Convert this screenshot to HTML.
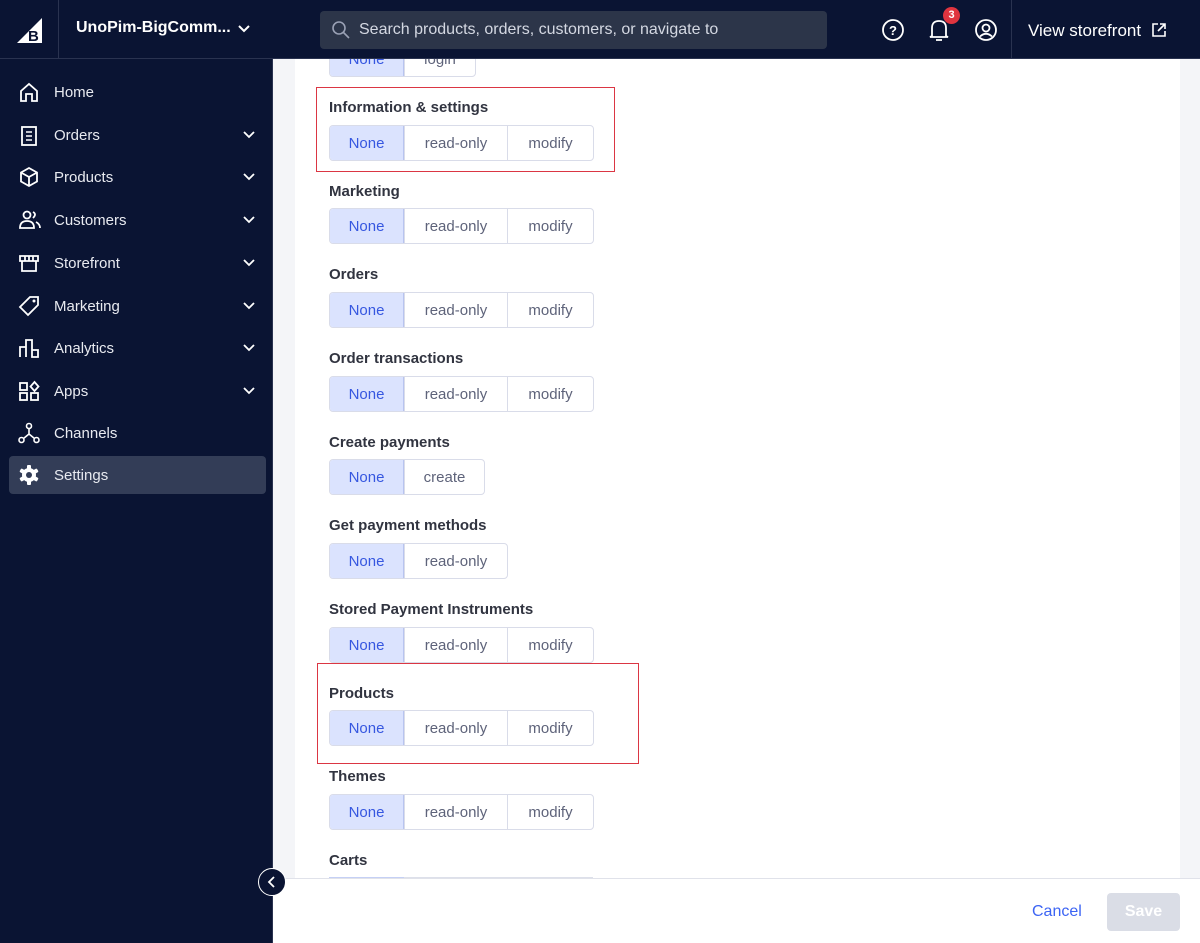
<!DOCTYPE html>
<html><head><meta charset="utf-8"><style>
*{box-sizing:border-box;margin:0;padding:0}
body{width:1200px;height:943px;overflow:hidden;font-family:"Liberation Sans",sans-serif;background:#f4f5f8;position:relative}
.hdr{position:absolute;left:0;top:0;width:1200px;height:59px;background:#0a1433;border-bottom:1px solid #2a3350;z-index:10}
.side{position:absolute;left:0;top:59px;width:273px;height:884px;background:#0a1433;border-right:1px solid #2a3350;z-index:5}
.nav{position:absolute;left:0;width:273px;height:38px;color:#e8eaf0;font-size:15px;display:flex;align-items:center}
.nav svg{position:absolute;left:18px}
.nav span{position:absolute;left:54px}
.nav .ch{position:absolute;left:242px}
.card{position:absolute;left:295px;top:59px;width:885px;height:820px;background:#fff}
.lbl{position:absolute;left:329px;font-size:15px;font-weight:bold;color:#313440}
.grp{position:absolute;left:329px;height:36px;display:flex;border:1px solid #d9dce9;border-radius:4px;overflow:hidden;background:#fff}
.grp div{height:34px;display:flex;align-items:center;justify-content:center;font-size:15px;color:#5e637a;border-left:1px solid #d9dce9}
.grp div:first-child{border-left:none;background:#dbe3fe;color:#3657e0;width:74px;border-right:1px solid #b8c4f0}
.grp .r{width:103px}.grp .m{width:86px}
.red{position:absolute;border:1.5px solid #db3643}
.foot{position:absolute;left:273px;top:878px;width:927px;height:65px;background:#fff;border-top:1px solid #e0e2ea;z-index:4}
</style></head><body>
<div class="hdr">
 <svg style="position:absolute;left:16px;top:17px" width="27" height="27" viewBox="0 0 27 27"><path d="M26 1 L26 26 L1 26 Z" fill="#fff"/><text x="12" y="24" font-size="15" font-weight="bold" fill="#0a1433" font-family="Liberation Sans">B</text></svg>
 <div style="position:absolute;left:58px;top:0;width:1px;height:59px;background:#2a3350"></div>
 <div style="position:absolute;left:76px;top:19px;color:#fff;font-size:16px;font-weight:bold">UnoPim-BigComm...</div>
 <svg style="position:absolute;left:237px;top:24px" width="14" height="10"><path d="M2 2 L7 7 L12 2" stroke="#fff" stroke-width="2" fill="none"/></svg>
 <div style="position:absolute;left:320px;top:11px;width:507px;height:38px;background:#2c3549;border-radius:4px"></div>
 <svg style="position:absolute;left:331px;top:20px" width="20" height="20"><circle cx="8" cy="8" r="6" stroke="#9aa1b5" stroke-width="1.6" fill="none"/><path d="M12.5 12.5 L18 18" stroke="#9aa1b5" stroke-width="1.6"/></svg>
 <div style="position:absolute;left:359px;top:21px;color:#d4d8e2;font-size:16px">Search products, orders, customers, or navigate to</div>
 <svg style="position:absolute;left:881px;top:18px" width="24" height="24"><circle cx="12" cy="12" r="10" stroke="#fff" stroke-width="1.8" fill="none"/><text x="12" y="17" text-anchor="middle" font-size="13" font-weight="bold" fill="#fff" font-family="Liberation Sans">?</text></svg>
 <svg style="position:absolute;left:928px;top:17px" width="22" height="26"><path d="M4 19 L4 11 Q4 4 11 4 Q18 4 18 11 L18 19 L20 20 L2 20 Z" stroke="#fff" stroke-width="1.8" fill="none"/><path d="M8 23 L14 23" stroke="#fff" stroke-width="1.8"/></svg>
 <div style="position:absolute;left:943px;top:7px;width:17px;height:17px;border-radius:50%;background:#e0343f;color:#fff;font-size:11px;font-weight:bold;text-align:center;line-height:17px">3</div>
 <svg style="position:absolute;left:974px;top:18px" width="24" height="24"><circle cx="12" cy="12" r="10" stroke="#fff" stroke-width="1.8" fill="none"/><circle cx="12" cy="10" r="3.5" stroke="#fff" stroke-width="1.8" fill="none"/><path d="M6 18.5 Q12 13 18 18.5" stroke="#fff" stroke-width="1.8" fill="none"/></svg>
 <div style="position:absolute;left:1011px;top:0;width:1px;height:59px;background:#2a3350"></div>
 <div style="position:absolute;left:1028px;top:21px;color:#fff;font-size:17px">View storefront</div>
 <svg style="position:absolute;left:1151px;top:22px" width="16" height="16"><path d="M7 2 L2 2 L2 14 L14 14 L14 9 M9 2 L14 2 L14 7 M14 2 L7 9" stroke="#fff" stroke-width="1.6" fill="none"/></svg>
</div>
<div class="side">
 <div class="nav" style="top:14px"><svg width="22" height="22"><path d="M3 10 L11 3 L19 10 L19 20 L14 20 L14 13 L8 13 L8 20 L3 20 Z" stroke="#fff" stroke-width="1.8" fill="none"/></svg><span>Home</span></div>
 <div class="nav" style="top:57px"><svg width="22" height="22"><rect x="4" y="3" width="14" height="18" stroke="#fff" stroke-width="1.8" fill="none"/><path d="M8 8h6M8 12h6M8 16h6" stroke="#fff" stroke-width="1.6"/></svg><span>Orders</span><svg class="ch" width="14" height="10"><path d="M2 2 L7 7 L12 2" stroke="#fff" stroke-width="1.8" fill="none"/></svg></div>
 <div class="nav" style="top:99px"><svg width="22" height="22"><path d="M11 2 L19 6.5 L19 15.5 L11 20 L3 15.5 L3 6.5 Z M3 6.5 L11 11 L19 6.5 M11 11 L11 20" stroke="#fff" stroke-width="1.8" fill="none"/></svg><span>Products</span><svg class="ch" width="14" height="10"><path d="M2 2 L7 7 L12 2" stroke="#fff" stroke-width="1.8" fill="none"/></svg></div>
 <div class="nav" style="top:142px"><svg width="24" height="22"><circle cx="9" cy="6" r="3.5" stroke="#fff" stroke-width="1.8" fill="none"/><path d="M2 19 Q2 12 9 12 Q16 12 16 19 Z" stroke="#fff" stroke-width="1.8" fill="none"/><path d="M15 3 Q19 5 15 9 M18 13 Q22 15 22 19" stroke="#fff" stroke-width="1.8" fill="none"/></svg><span>Customers</span><svg class="ch" width="14" height="10"><path d="M2 2 L7 7 L12 2" stroke="#fff" stroke-width="1.8" fill="none"/></svg></div>
 <div class="nav" style="top:185px"><svg width="22" height="22"><path d="M2 4 L20 4 L20 9 L2 9 Z M4 9 L4 19 L18 19 L18 9 M7 4 L7 9 M11 4 L11 9 M15 4 L15 9" stroke="#fff" stroke-width="1.8" fill="none"/></svg><span>Storefront</span><svg class="ch" width="14" height="10"><path d="M2 2 L7 7 L12 2" stroke="#fff" stroke-width="1.8" fill="none"/></svg></div>
 <div class="nav" style="top:228px"><svg width="22" height="22"><path d="M12 2 L20 2 L20 10 L10 20 L2 12 Z" stroke="#fff" stroke-width="1.8" fill="none"/><circle cx="16" cy="6" r="1.5" fill="#fff"/></svg><span>Marketing</span><svg class="ch" width="14" height="10"><path d="M2 2 L7 7 L12 2" stroke="#fff" stroke-width="1.8" fill="none"/></svg></div>
 <div class="nav" style="top:270px"><svg width="22" height="22"><path d="M2 20 L2 10 L8 10 L8 20 M8 20 L8 3 L14 3 L14 20 M14 20 L14 13 L20 13 L20 20 Z" stroke="#fff" stroke-width="1.8" fill="none"/></svg><span>Analytics</span><svg class="ch" width="14" height="10"><path d="M2 2 L7 7 L12 2" stroke="#fff" stroke-width="1.8" fill="none"/></svg></div>
 <div class="nav" style="top:313px"><svg width="22" height="22"><rect x="2" y="3" width="7" height="7" stroke="#fff" stroke-width="1.8" fill="none"/><rect x="2" y="13" width="7" height="7" stroke="#fff" stroke-width="1.8" fill="none"/><rect x="13" y="13" width="7" height="7" stroke="#fff" stroke-width="1.8" fill="none"/><path d="M16.5 2 L20.5 6.5 L16.5 11 L12.5 6.5 Z" stroke="#fff" stroke-width="1.8" fill="none"/></svg><span>Apps</span><svg class="ch" width="14" height="10"><path d="M2 2 L7 7 L12 2" stroke="#fff" stroke-width="1.8" fill="none"/></svg></div>
 <div class="nav" style="top:355px"><svg width="22" height="22"><circle cx="11" cy="4" r="2.5" stroke="#fff" stroke-width="1.6" fill="none"/><circle cx="3.5" cy="18" r="2.5" stroke="#fff" stroke-width="1.6" fill="none"/><circle cx="18.5" cy="18" r="2.5" stroke="#fff" stroke-width="1.6" fill="none"/><path d="M11 6.5 L11 12 L5.5 16.5 M11 12 L16.5 16.5" stroke="#fff" stroke-width="1.6" fill="none"/></svg><span>Channels</span></div>
 <div style="position:absolute;left:9px;top:397px;width:257px;height:38px;background:#333d57;border-radius:4px"></div>
 <div class="nav" style="top:397px"><svg width="22" height="22" viewBox="0 0 22 22"><g fill="#fff"><circle cx="11" cy="11" r="7"/><rect x="9" y="1" width="4" height="20" rx="1"/><rect x="9" y="1" width="4" height="20" rx="1" transform="rotate(60 11 11)"/><rect x="9" y="1" width="4" height="20" rx="1" transform="rotate(120 11 11)"/></g><circle cx="11" cy="11" r="3" fill="#333d57"/></svg><span>Settings</span></div>
</div>
<div class="card"></div>
<div class="grp" style="top:41px"><div>None</div><div style="width:71px">login</div></div>
<div class="red" style="left:316px;top:87px;width:299px;height:85px"></div>
<div class="red" style="left:317px;top:663px;width:322px;height:101px"></div>
<div class="foot">
 <div style="position:absolute;left:759px;top:24px;color:#3c64f4;font-size:16px">Cancel</div>
 <div style="position:absolute;left:834px;top:14px;width:73px;height:38px;background:#dadde6;border-radius:4px;color:#fff;font-size:16px;font-weight:bold;text-align:center;line-height:38px">Save</div>
</div>
<div style="position:absolute;left:258px;top:868px;width:28px;height:28px;border-radius:50%;background:#0a1433;border:1.5px solid #fff;z-index:8"></div>
<svg style="position:absolute;left:265px;top:875px;z-index:9" width="14" height="14"><path d="M9 2 L4 7 L9 12" stroke="#fff" stroke-width="1.8" fill="none"/></svg>
<div class="lbl" style="top:99px">Information &amp; settings</div>
<div class="grp" style="top:125px"><div>None</div><div class="r">read-only</div><div class="m">modify</div></div>
<div class="lbl" style="top:183px">Marketing</div>
<div class="grp" style="top:208px"><div>None</div><div class="r">read-only</div><div class="m">modify</div></div>
<div class="lbl" style="top:266px">Orders</div>
<div class="grp" style="top:292px"><div>None</div><div class="r">read-only</div><div class="m">modify</div></div>
<div class="lbl" style="top:350px">Order transactions</div>
<div class="grp" style="top:376px"><div>None</div><div class="r">read-only</div><div class="m">modify</div></div>
<div class="lbl" style="top:434px">Create payments</div>
<div class="grp" style="top:459px"><div>None</div><div style="width:80px">create</div></div>
<div class="lbl" style="top:517px">Get payment methods</div>
<div class="grp" style="top:543px"><div>None</div><div class="r">read-only</div></div>
<div class="lbl" style="top:601px">Stored Payment Instruments</div>
<div class="grp" style="top:627px"><div>None</div><div class="r">read-only</div><div class="m">modify</div></div>
<div class="lbl" style="top:685px">Products</div>
<div class="grp" style="top:710px"><div>None</div><div class="r">read-only</div><div class="m">modify</div></div>
<div class="lbl" style="top:768px">Themes</div>
<div class="grp" style="top:794px"><div>None</div><div class="r">read-only</div><div class="m">modify</div></div>
<div class="lbl" style="top:852px">Carts</div>
<div style="position:absolute;left:329px;top:877px;width:264px;height:2px;background:#dde0ea"></div>
<div style="position:absolute;left:329px;top:877px;width:75px;height:2px;background:#c5d0f5"></div>
</body></html>
